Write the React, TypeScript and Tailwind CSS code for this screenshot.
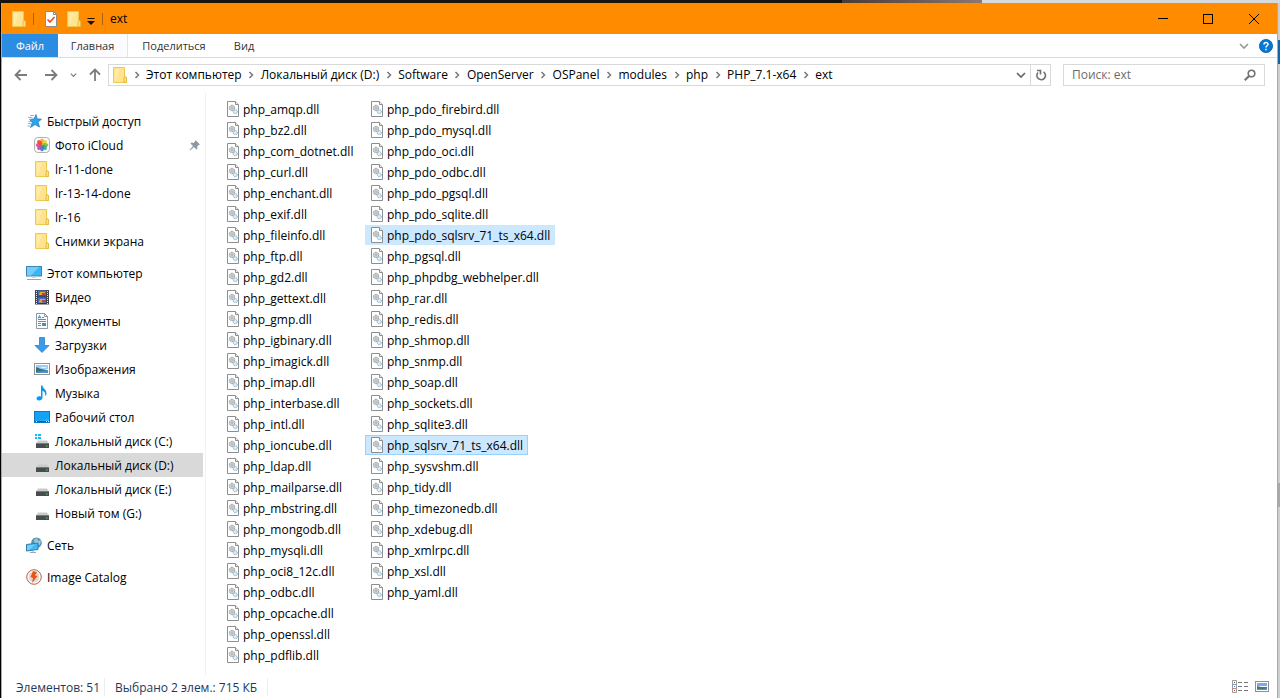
import React from "react";

type IconProps = { className?: string };

const Folder = ({ className = "" }: IconProps) => (
  <svg viewBox="0 0 14 16" className={`h-4 w-3.5 shrink-0 ${className}`} aria-hidden="true">
    <path d="M.5 .5H11.5V9.500L13.500 10.500V15.500H.5Z" fill="#ffe48f" stroke="#eec951" />
    <path d="M11 10V15.500H13.500V11L12.500 9.500H11.500Z" fill="#ffdf7c" stroke="#e6bb3c" />
    <path d="M2 2H7L3 13H2Z" fill="#ffebaa" />
  </svg>
);

const Star = () => (
  <svg viewBox="0 0 16 16" className="h-4 w-4 shrink-0" aria-hidden="true">
    <path d="M10 1.500L11 5.800L15.500 6.200L12 9L13.500 14L9 11.500L4.500 14.500L6.300 9.500L3.500 6.400L8 6Z" fill="#2ba3f0" stroke="#2783c5" strokeWidth=".8" />
    <path d="M4 2.500H8M2 4.500H6.500M3 6.500H5M2.500 8.500H5M2 10.500H5M1.500 13H4.500" stroke="#6db9ec" strokeWidth=".9" />
  </svg>
);

const petals = [
  ["#f9a01b", 0],
  ["#e8cf2c", 45],
  ["#6fbf45", 90],
  ["#2fa58d", 135],
  ["#3f74d1", 180],
  ["#8d5cc0", 225],
  ["#dd4a86", 270],
  ["#f0432c", 315],
] as const;

const Photos = () => (
  <svg viewBox="0 0 16 16" className="h-4 w-4 shrink-0" aria-hidden="true">
    <rect x=".6" y=".6" width="14.800" height="14.800" rx="3" fill="#fff" stroke="#aaa" />
    {petals.map(([color, angle]) => (
      <ellipse key={angle} cx="8" cy="4.700" rx="2" ry="2.900" fill={color} opacity=".9" transform={`rotate(${angle} 8 8)`} />
    ))}
  </svg>
);

const Computer = () => (
  <svg viewBox="0 0 16 16" className="h-4 w-4 shrink-0" aria-hidden="true">
    <rect x=".5" y="1.500" width="15" height="9.500" fill="#3eb4f3" stroke="#3b87b5" />
    <path d="M1 2H13L5 10.500H1Z" fill="#78cdf8" />
    <path d="M6 11.500H10V13H6Z" fill="#c4d5df" />
    <path d="M1 14.500H15" stroke="#88a9bd" />
  </svg>
);

const Video = () => (
  <svg viewBox="0 0 16 16" className="h-4 w-4 shrink-0" aria-hidden="true">
    <rect x="1" y="1" width="14" height="14.500" fill="#41444a" />
    <rect x="4" y="1.500" width="8" height="6" fill="#4472c8" />
    <rect x="4" y="8.500" width="8" height="6.500" fill="#4472c8" />
    <path d="M6 3H11V5L9 6H5ZM6 10H11V12L9 13.500H5Z" fill="#eba338" />
    <path d="M8 4H11V6H8ZM8 11H11V13H8Z" fill="#b94141" />
    <path d="M2.500 2V15M13.500 2V15" stroke="#e8e8e8" strokeDasharray="1 1" />
    <path d="M4 7H12M4 14.500H12" stroke="#263c60" />
  </svg>
);

const Documents = () => (
  <svg viewBox="0 0 16 16" className="h-4 w-4 shrink-0" aria-hidden="true">
    <path d="M2.500 .5H10.500L13.500 3.500V15.500H2.500Z" fill="#fff" stroke="#93999c" />
    <path d="M10.500 .5V3.500H13.500" fill="none" stroke="#93999c" />
    <path d="M4 5.500L5.500 2.500L7 5.500M4.500 4.500H6.500M8 4.500H10M4 6.500H12M4 8.500H12M4 10.500H7M4 12.500H7" fill="none" stroke="#329ee0" />
    <rect x="8" y="10" width="4" height="3" fill="#4a8eb5" />
  </svg>
);

const Download = () => (
  <svg viewBox="0 0 16 16" className="h-4 w-4 shrink-0" aria-hidden="true">
    <path d="M5.500 .5H10.500V8.500H15L8 15.500L1 8.500H5.500Z" fill="#3c9be8" stroke="#2980cb" strokeWidth=".8" />
  </svg>
);

const Picture = () => (
  <svg viewBox="0 0 16 16" className="h-4 w-4 shrink-0" aria-hidden="true">
    <rect x=".5" y="2.500" width="15" height="11" fill="#fff" stroke="#939393" />
    <rect x="2" y="4" width="12" height="4" fill="#9bcdf6" />
    <path d="M2 6L7 8L14 9V12H2Z" fill="#376f7b" />
    <path d="M2 11L14 9V12H2Z" fill="#4f91c9" />
    <path d="M7 6H12V7H7Z" fill="#e5f3ff" />
  </svg>
);

const Music = () => (
  <svg viewBox="0 0 16 16" className="h-4 w-4 shrink-0" aria-hidden="true">
    <path d="M7 .5H8.500C9 4 13 4.500 12.500 9C12 10.500 11.500 10.800 11 11C11.800 8 10.500 6.500 8.500 6V12.500C8.500 14.500 6.500 15.800 4.500 15.500C2 15 2 12.500 4 11.500C5 11 6 11 7 11.500Z" fill="#0c99ed" />
  </svg>
);

const Desktop = () => (
  <svg viewBox="0 0 16 16" className="h-4 w-4 shrink-0" aria-hidden="true">
    <rect x=".5" y="2.500" width="15" height="11" fill="#14a2f7" stroke="#1976b8" />
    <path d="M15 3V10L3 12H1V12.500H15Z" fill="#2db3fa" />
    <path d="M1 12.500H15" stroke="#0d5d99" />
    <path d="M2 12.500H3M12 12.500H13M14 12.500H15" stroke="#fff" />
  </svg>
);

const Drive = ({ system = false }: { system?: boolean }) => (
  <svg viewBox="0 0 16 16" className="h-4 w-4 shrink-0" aria-hidden="true">
    {system && <path d="M1 1H3V3H1ZM4 1H7V3H4ZM1 4H3V6H1ZM4 4H7V6H4Z" fill="#13b9f4" />}
    <path d="M4 7.500H13L15 10.500H2Z" fill="#c9cccf" />
    <rect x="2" y="10.500" width="13" height="4.500" fill="#494c4f" />
    <path d="M2 10.500H15" stroke="#777a7c" />
    <rect x="12" y="12.500" width="1.500" height="1" fill="#43e653" />
  </svg>
);

const Network = () => (
  <svg viewBox="0 0 16 16" className="h-4 w-4 shrink-0" aria-hidden="true">
    <circle cx="10.500" cy="5.700" r="5.300" fill="#5793b8" />
    <path d="M8 3L11 1L12 4L15 3L14 8L11 7L9 9Z" fill="#9bc8da" />
    <path d="M.5 7.500L12 6V12.500L.5 14Z" fill="#43b9f3" stroke="#367ca9" />
    <path d="M1 8.500L9 7.500L3 13H1Z" fill="#75d0fa" />
    <path d="M7 13.500V15M4 15.500H10" stroke="#91abba" />
  </svg>
);

const Catalog = () => (
  <svg viewBox="0 0 16 16" className="h-4 w-4 shrink-0" aria-hidden="true">
    <circle cx="8" cy="8" r="7.300" fill="#eee" stroke="#b96541" />
    <circle cx="8" cy="8" r="5.800" fill="#ded9d6" stroke="#fff" />
    <path d="M7 2L11 3L9 6.500L11.500 7L6 14L7 9L4.500 8Z" fill="#e95313" />
  </svg>
);

const Pin = () => (
  <svg viewBox="0 0 12 12" className="h-3 w-3 shrink-0" aria-hidden="true">
    <path d="M6.500 1L11 5.500L9.500 6L8 8L8.500 10L7.500 10.500L5 8L1 11.500L.5 11L4 7L1.500 4.500L2.500 3.500L4.500 4L6 2.500Z" fill="#8c98a3" />
  </svg>
);

const DllIcon = () => (
  <svg viewBox="0 0 12 16" className="h-4 w-3 shrink-0" aria-hidden="true">
    <path d="M.5 .5H8.500L11.500 3.500V15.500H.5Z" fill="#fff" stroke="#8e8e8e" />
    <path d="M8.500 .5V3.500H11.500" fill="#eee" stroke="#8e8e8e" />
    <circle cx="5" cy="7" r="2.700" fill="#d8dbdd" stroke="#7f878c" strokeDasharray="1 .6" />
    <circle cx="5" cy="7" r="1" fill="#fff" stroke="#7f878c" strokeWidth=".6" />
    <circle cx="8.300" cy="10.700" r="2" fill="#d7effc" stroke="#77a9cb" strokeDasharray="1 .5" />
  </svg>
);

const Chevron = () => (
  <svg viewBox="0 0 6 8" className="h-2 w-1.5 shrink-0" aria-hidden="true">
    <path d="M1.500 1L4.500 4L1.500 7" fill="none" stroke="#777" strokeWidth="1.500" />
  </svg>
);

const Down = ({ className = "" }: IconProps) => (
  <svg viewBox="0 0 10 6" className={className} aria-hidden="true">
    <path d="M1 1L5 5L9 1" fill="none" stroke="currentColor" strokeWidth="1.700" />
  </svg>
);

const Arrow = ({ className = "" }: IconProps) => (
  <svg viewBox="0 0 14 12" className={`h-3 w-3.5 ${className}`} aria-hidden="true">
    <path d="M13 6H2M6.500 1L1.500 6L6.500 11" fill="none" stroke="#7c7c7c" strokeWidth="1.800" />
  </svg>
);

type NavEntry = { label: string; icon: React.ReactNode; pinned?: boolean; active?: boolean };
type NavGroup = { label: string; icon: React.ReactNode; items: NavEntry[] };

const groups: NavGroup[] = [
  {
    label: "Быстрый доступ",
    icon: <Star />,
    items: [
      { label: "Фото iCloud", icon: <Photos />, pinned: true },
      { label: "lr-11-done", icon: <Folder /> },
      { label: "lr-13-14-done", icon: <Folder /> },
      { label: "lr-16", icon: <Folder /> },
      { label: "Снимки экрана", icon: <Folder /> },
    ],
  },
  {
    label: "Этот компьютер",
    icon: <Computer />,
    items: [
      { label: "Видео", icon: <Video /> },
      { label: "Документы", icon: <Documents /> },
      { label: "Загрузки", icon: <Download /> },
      { label: "Изображения", icon: <Picture /> },
      { label: "Музыка", icon: <Music /> },
      { label: "Рабочий стол", icon: <Desktop /> },
      { label: "Локальный диск (C:)", icon: <Drive system /> },
      { label: "Локальный диск (D:)", icon: <Drive />, active: true },
      { label: "Локальный диск (E:)", icon: <Drive /> },
      { label: "Новый том (G:)", icon: <Drive /> },
    ],
  },
  { label: "Сеть", icon: <Network />, items: [] },
  { label: "Image Catalog", icon: <Catalog />, items: [] },
];

const crumbs = ["Этот компьютер", "Локальный диск (D:)", "Software", "OpenServer", "OSPanel", "modules", "php", "PHP_7.1-x64", "ext"];

const files = [
  "amqp", "bz2", "com_dotnet", "curl", "enchant", "exif", "fileinfo", "ftp", "gd2", "gettext", "gmp", "igbinary", "imagick", "imap",
  "interbase", "intl", "ioncube", "ldap", "mailparse", "mbstring", "mongodb", "mysqli", "oci8_12c", "odbc", "opcache", "openssl", "pdflib",
  "pdo_firebird", "pdo_mysql", "pdo_oci", "pdo_odbc", "pdo_pgsql", "pdo_sqlite", "pdo_sqlsrv_71_ts_x64", "pgsql", "phpdbg_webhelper",
  "rar", "redis", "shmop", "snmp", "soap", "sockets", "sqlite3", "sqlsrv_71_ts_x64", "sysvshm", "tidy", "timezonedb", "xdebug", "xmlrpc",
  "xsl", "yaml",
];

const highlight: Record<string, string> = {
  pdo_sqlsrv_71_ts_x64: "border-[#cce8ff] bg-[#cce8ff]",
  sqlsrv_71_ts_x64: "border-[#99d1ff] bg-[#cce8ff]",
};

function TitleBar() {
  return (
    <header className="flex h-[31px] items-center bg-[#ff8c00] pl-2.5">
      <Folder />
      <span className="ml-[7px] h-3 w-px bg-[#a66315]" />
      <button aria-label="Свойства" className="ml-[11px]">
        <svg viewBox="0 0 12 16" className="h-4 w-3" aria-hidden="true">
          <path d="M.5 .5H8.500L11.500 3.500V15.500H.5Z" fill="#fff" stroke="#8c8c8c" />
          <path d="M8.500 .5V3.500H11.500" fill="none" stroke="#8c8c8c" />
          <path d="M2.500 8.500L5 11L9.500 6" fill="none" stroke="#e8501c" strokeWidth="1.700" />
        </svg>
      </button>
      <button aria-label="Новая папка" className="ml-2.5"><Folder /></button>
      <button aria-label="Настройка панели быстрого доступа" className="ml-1.5 pt-1">
        <svg viewBox="0 0 8 8" className="h-2 w-2" aria-hidden="true">
          <path d="M.5 1.500H7.500" stroke="#111" />
          <path d="M0 4H8L4 8Z" fill="#111" />
        </svg>
      </button>
      <span className="ml-[7px] h-3 w-px bg-[#a66315]" />
      <h1 className="ml-[7px] grow text-[12px] leading-4">ext</h1>
      <button aria-label="Свернуть" className="flex h-full w-[45px] items-center justify-center">
        <span className="h-px w-2.5 bg-black" />
      </button>
      <button aria-label="Развернуть" className="flex h-full w-[45px] items-center justify-center">
        <span className="h-2.5 w-2.5 border border-black" />
      </button>
      <button aria-label="Закрыть" className="flex h-full w-[47px] items-center justify-center">
        <svg viewBox="0 0 10 10" className="h-2.5 w-2.5" aria-hidden="true">
          <path d="M0 0L10 10M10 0L0 10" stroke="#000" />
        </svg>
      </button>
    </header>
  );
}

function Ribbon() {
  return (
    <nav aria-label="Лента" className="flex h-6 items-stretch border-b border-[#dadbdc] text-[11px] text-[#333]">
      <button className="w-14 bg-[#2b8ce1] pt-0.5 text-white">Файл</button>
      <button className="w-[70px] border-r border-[#e4e5ea] bg-[#fcfcff] pt-0.5">Главная</button>
      <button className="w-[92px] pt-0.5">Поделиться</button>
      <button className="w-12 pt-0.5">Вид</button>
      <span className="grow" />
      <button aria-label="Развернуть ленту" className="mr-2.5 text-[#999]"><Down className="h-1.5 w-2.5" /></button>
      <button aria-label="Справка" className="mr-1">
        <svg viewBox="0 0 14 14" className="h-3.5 w-3.5" aria-hidden="true">
          <circle cx="7" cy="7" r="6.600" fill="#0878d7" stroke="#075ca9" strokeWidth=".8" />
          <path d="M5 5.500C5 3 9 3 9 5.300C9 6.800 7 6.800 7 8.500M7 9.800V11.200" fill="none" stroke="#fff" strokeWidth="1.500" />
        </svg>
      </button>
    </nav>
  );
}

function AddressBar() {
  return (
    <div className="mb-0.5 flex h-[33px] items-center px-3">
      <button aria-label="Назад" className="w-3.5"><Arrow /></button>
      <button aria-label="Вперёд" className="ml-4 w-3.5"><Arrow className="rotate-180" /></button>
      <button aria-label="Последние расположения" className="ml-3 text-[#777]"><Down className="h-1 w-[7px]" /></button>
      <button aria-label="Вверх" className="ml-[11px]"><Arrow className="rotate-90" /></button>
      <div className="ml-1.5 flex h-[22px] grow items-center border border-[#d9d9d9] pl-1">
        <Folder />
        <ol className="flex grow items-center text-[12px] leading-4">
          {crumbs.map((name) => (
            <li key={name} className="flex items-center">
              <span className="flex w-[19px] justify-center"><Chevron /></span>
              <button>{name}</button>
            </li>
          ))}
        </ol>
        <button aria-label="Предыдущие расположения" className="mr-1 text-[#666]"><Down className="h-1.5 w-2.5" /></button>
        <button aria-label="Обновить" className="flex h-full w-5 items-center justify-center border-l border-[#d9d9d9]">
          <svg viewBox="0 0 12 12" className="h-3 w-3" aria-hidden="true">
            <path d="M8.500 2.800A4.300 4.300 0 1 1 3 3.500M2 1.500H5.500V5.500" fill="none" stroke="#707070" strokeWidth="1.600" />
          </svg>
        </button>
      </div>
      <label className="ml-3 flex h-[22px] w-[202px] items-center border border-[#d9d9d9] px-2">
        <input aria-label="Поиск: ext" placeholder="Поиск: ext" className="min-w-0 grow text-[12px] leading-4 outline-none placeholder:text-[#6d6d6d]" />
        <svg viewBox="0 0 12 12" className="h-3 w-3 shrink-0" aria-hidden="true">
          <circle cx="7.500" cy="4.500" r="3.300" fill="none" stroke="#707070" strokeWidth="1.600" />
          <path d="M5 7L.8 11.200" stroke="#707070" strokeWidth="2" />
        </svg>
      </label>
    </div>
  );
}

function Sidebar() {
  return (
    <aside className="flex w-[204px] shrink-0 flex-col gap-2 border-r border-[#f2f2f2] pt-4 text-[12px] leading-4">
      {groups.map((group) => (
        <section key={group.label} className="pr-0.5">
          <a href="#" className="flex h-6 items-center gap-[5px] pl-6">{group.icon}<span className="pt-0.5">{group.label}</span></a>
          {group.items.map((item) => (
            <a key={item.label} href="#" className={`flex h-6 items-center gap-[5px] pl-8 ${item.active ? "bg-[#d9d9d9]" : ""}`}>
              <span className="flex w-4 justify-center">{item.icon}</span>
              <span className="grow pt-0.5">{item.label}</span>
              {item.pinned && <span className="mr-0.5"><Pin /></span>}
            </a>
          ))}
        </section>
      ))}
    </aside>
  );
}

function FileList() {
  return (
    <ul className="grid grow auto-cols-[144px] grid-flow-col grid-rows-[repeat(27,21px)] content-start pl-[15px] pt-[5px] text-[12px] leading-4">
      {files.map((name) => (
        <li key={name} className="flex items-center">
          <button className={`flex h-5 items-center gap-1 border pl-[5px] pr-1 whitespace-nowrap ${highlight[name] ?? "border-transparent"}`}>
            <DllIcon />
            <span className="pt-0.5">php_{name}.dll</span>
          </button>
        </li>
      ))}
    </ul>
  );
}

function StatusBar() {
  return (
    <footer className="flex h-[23px] items-center pl-3.5 pr-2 text-[12px] leading-4 text-[#1e395b]">
      <span className="border-r border-[#eee] pr-1 pt-0.5">Элементов: 51</span>
      <span className="border-r border-[#eee] px-2.5 pt-0.5">Выбрано 2 элем.: 715 КБ</span>
      <span className="grow" />
      <button aria-label="Таблица" className="mr-[7px]">
        <svg viewBox="0 0 16 13" className="h-[13px] w-4" aria-hidden="true">
          <path d="M.5 .5H4.500V12.500H.5ZM.5 4.500H4.500M.5 8.500H4.500" fill="#fff" stroke="#999" />
          <path d="M6 2.500H10M12 2.500H16M6 6.500H10M12 6.500H16M6 10.500H10M12 10.500H16" stroke="#777" />
          <path d="M2 2.500H3" stroke="#555" /><path d="M2 6.500H3" stroke="#3d82ff" /><path d="M2 10.500H3" stroke="#e22" />
        </svg>
      </button>
      <button aria-label="Крупные значки">
        <svg viewBox="0 0 14 11" className="h-[11px] w-3.5" aria-hidden="true">
          <rect x=".5" y=".5" width="13" height="10" fill="#fff" stroke="#8f8f8f" />
          <rect x="2" y="2" width="10" height="3" fill="#71adf2" />
          <path d="M2 5L6 6L12 6V9H2Z" fill="#477777" />
          <path d="M2 8H9L12 7V9H2Z" fill="#5e93cf" />
        </svg>
      </button>
    </footer>
  );
}

export default function App() {
  return (
    <div className="flex min-h-screen flex-col bg-[#cfcfcf] font-['Open_Sans','Noto_Sans',sans-serif] text-black">
      <div className="flex h-[3px] bg-[#17130f]">
        <div className="grow-[84]" />
        <div className="grow-[14] bg-linear-to-r from-[#4a3b36] to-[#8d7871]" />
        <div className="w-[298px] bg-[#d7dadd]" />
      </div>
      <div className="flex grow">
        <div className="w-px bg-black" />
        <main className="flex min-w-0 grow flex-col border-x border-[#ff9a1f] bg-white">
          <TitleBar />
          <Ribbon />
          <AddressBar />
          <div className="flex grow">
            <Sidebar />
            <FileList />
          </div>
          <StatusBar />
        </main>
        <div className="flex w-0.5 flex-col">
          <div className="h-[37px]" />
          <div className="h-6 bg-[#1664a8]" />
          <div className="grow" />
          <div className="h-6 bg-[#a9a9a9]" />
          <div className="h-[191px]" />
        </div>
      </div>
    </div>
  );
}
